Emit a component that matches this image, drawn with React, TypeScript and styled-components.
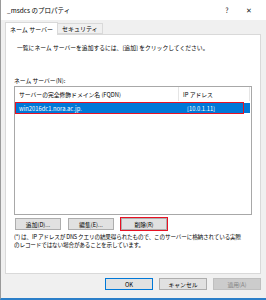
import React from 'react';
import styled, { createGlobalStyle } from 'styled-components';

const FONT = '"Noto Sans CJK JP", "Noto Sans", "Liberation Sans", sans-serif';

const GlobalStyle = createGlobalStyle`
  html, body {
    margin: 0;
    padding: 0;
    background: #f0f0f0;
  }
  body {
    font-family: ${FONT};
  }
`;

const S = {
  Window: styled.div`
    display: flex;
    flex-direction: column;
    width: 266px;
    height: 300px;
    box-sizing: border-box;
    background: #f0f0f0;
    border-left: 1px solid #9a9a9a;
    border-bottom: 2px solid #2b7fc9;
    overflow: hidden;
    color: #000;
  `,
  TitleBar: styled.div`
    display: flex;
    align-items: center;
    height: 20px;
    padding: 0 6px;
    background: #ffffff;
    font-size: 6.5px;
  `,
  Title: styled.div`
    flex: 1;
  `,
  TitleButton: styled.div<{ $w: number }>`
    width: ${(p) => p.$w}px;
    text-align: center;
    font-size: 7px;
    color: #222;
  `,
  Body: styled.div`
    display: flex;
    flex-direction: column;
    padding: 2px 5px 0 4px;
  `,
  Tabs: styled.div`
    display: flex;
    align-items: flex-end;
    height: 12px;
  `,
  Tab: styled.div<{ $active?: boolean }>`
    display: flex;
    align-items: center;
    justify-content: center;
    box-sizing: border-box;
    height: ${(p) => (p.$active ? 13 : 11)}px;
    padding: 0 4px;
    margin-bottom: ${(p) => (p.$active ? -1 : 0)}px;
    background: ${(p) => (p.$active ? '#ffffff' : '#f0f0f0')};
    border: 1px solid #d9d9d9;
    border-bottom: ${(p) => (p.$active ? 'none' : '1px solid #d9d9d9')};
    border-left: ${(p) => (p.$active ? '1px solid #d9d9d9' : 'none')};
    font-size: 6px;
    position: relative;
    z-index: ${(p) => (p.$active ? 1 : 0)};
  `,
  Panel: styled.div`
    display: flex;
    flex-direction: column;
    box-sizing: border-box;
    height: 240px;
    padding: 8px 8px 0 8px;
    background: #ffffff;
    border: 1px solid #d9d9d9;
  `,
  Intro: styled.div`
    font-size: 5.8px;
    padding-left: 3px;
    line-height: 10px;
  `,
  Label: styled.div`
    margin-top: 23px;
    font-size: 5.8px;
    line-height: 10px;
  `,
  ListBox: styled.div`
    display: flex;
    flex-direction: column;
    box-sizing: border-box;
    height: 129px;
    border: 1px solid #a8a8a8;
  `,
  HeaderRow: styled.div`
    display: flex;
    height: 14px;
    margin-right: 1px;
    border-right: 1px solid #e5e5e5;
  `,
  HeaderCell: styled.div<{ $w?: number }>`
    display: flex;
    align-items: center;
    box-sizing: border-box;
    ${(p) => (p.$w ? `width: ${p.$w}px;` : 'flex: 1;')}
    padding-left: 4px;
    font-size: 5.8px;
    color: #000;
    border-right: ${(p) => (p.$w ? '1px solid #e5e5e5' : 'none')};
  `,
  Row: styled.div<{ $selected?: boolean }>`
    display: flex;
    height: 10px;
    margin: 2px 1px 0 0;
    background: ${(p) => (p.$selected ? '#0078d7' : 'transparent')};
    color: ${(p) => (p.$selected ? '#ffffff' : '#000')};
    position: relative;
  `,
  Cell: styled.div<{ $w?: number }>`
    display: flex;
    align-items: center;
    ${(p) => (p.$w ? `width: ${p.$w}px;` : 'flex: 1;')}
    padding-left: 4px;
    font-size: 5.8px;
  `,
  Highlight: styled.div<{ $w: number }>`
    position: absolute;
    left: 0;
    top: -1px;
    width: ${(p) => p.$w}px;
    height: 12px;
    box-sizing: border-box;
    border: 1.5px solid #e81123;
    pointer-events: none;
  `,
  ButtonRow: styled.div`
    display: flex;
    gap: 7px;
    margin-top: 3px;
    padding-left: 1px;
  `,
  Button: styled.div<{ $w?: number; $marked?: boolean; $default?: boolean; $disabled?: boolean }>`
    display: flex;
    align-items: center;
    justify-content: center;
    box-sizing: border-box;
    width: ${(p) => p.$w ?? 46}px;
    height: 12px;
    background: ${(p) => (p.$disabled ? '#cccccc' : '#e1e1e1')};
    border: 1px solid ${(p) => (p.$default ? '#0078d7' : p.$disabled ? '#bfbfbf' : '#adadad')};
    color: ${(p) => (p.$disabled ? '#838383' : '#000')};
    font-size: 5.8px;
    outline: ${(p) => (p.$marked ? '1.5px solid #e81123' : 'none')};
    outline-offset: 0.5px;
  `,
  Note: styled.div`
    margin-top: 3px;
    font-size: 5.6px;
    line-height: 8px;
    letter-spacing: -0.15px;
    white-space: nowrap;
  `,
  Footer: styled.div`
    display: flex;
    justify-content: flex-end;
    gap: 6px;
    margin-top: 4px;
  `
};

const App = () => {
  return (
    <>
      <GlobalStyle />
      <S.Window>
        <S.TitleBar>
          <S.Title>_msdcs のプロパティ</S.Title>
          <S.TitleButton $w={22}>?</S.TitleButton>
          <S.TitleButton $w={22}>✕</S.TitleButton>
        </S.TitleBar>
        <S.Body>
          <S.Tabs>
            <S.Tab $active>ネーム サーバー</S.Tab>
            <S.Tab>セキュリティ</S.Tab>
          </S.Tabs>
          <S.Panel>
            <S.Intro>一覧にネーム サーバーを追加するには、[追加] をクリックしてください。</S.Intro>
            <S.Label>ネーム サーバー(N):</S.Label>
            <S.ListBox>
              <S.HeaderRow>
                <S.HeaderCell $w={164}>サーバーの完全修飾ドメイン名 (FQDN)</S.HeaderCell>
                <S.HeaderCell>IP アドレス</S.HeaderCell>
              </S.HeaderRow>
              <S.Row $selected>
                <S.Cell $w={164}>win2016dc1.nora.ac.jp.</S.Cell>
                <S.Cell>[10.0.1.11]</S.Cell>
                <S.Highlight $w={229} />
              </S.Row>
            </S.ListBox>
            <S.ButtonRow>
              <S.Button>追加(D)...</S.Button>
              <S.Button>編集(E)...</S.Button>
              <S.Button $marked>削除(R)</S.Button>
            </S.ButtonRow>
            <S.Note>
              (*) は、IP アドレスが DNS クエリの結果得られたもので、このサーバーに格納されている実際
              <br />
              のレコードではない場合があることを示しています。
            </S.Note>
          </S.Panel>
          <S.Footer>
            <S.Button $w={48} $default>OK</S.Button>
            <S.Button $w={48}>キャンセル</S.Button>
            <S.Button $w={48} $disabled>適用(A)</S.Button>
          </S.Footer>
        </S.Body>
      </S.Window>
    </>
  );
};

export default App;
